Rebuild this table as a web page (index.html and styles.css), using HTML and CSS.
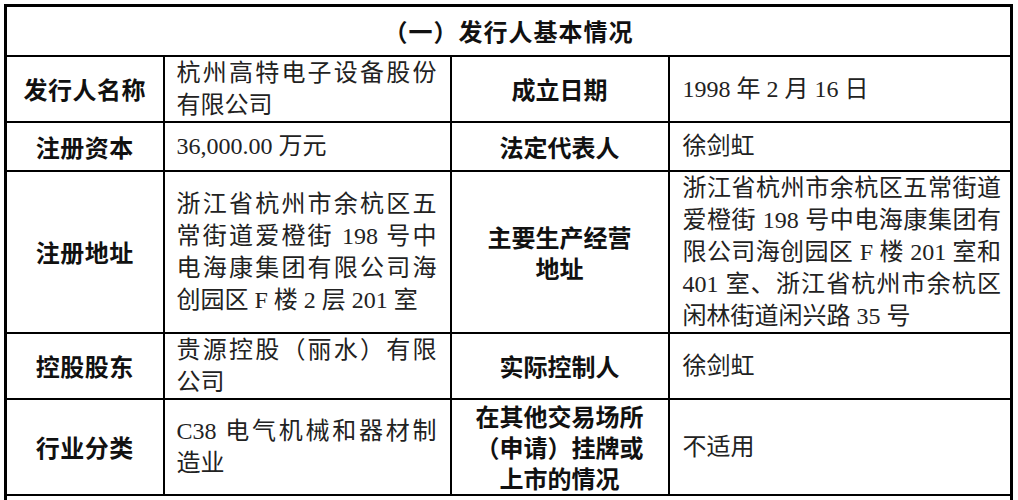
FILE: index.html
```html
<!DOCTYPE html>
<html lang="zh-CN">
<head>
<meta charset="utf-8">
<title>发行人基本情况</title>
<link rel="stylesheet" href="styles.css">
</head>
<body>
<table class="info">
  <colgroup>
    <col class="c1"><col class="c2"><col class="c3"><col class="c4">
  </colgroup>
  <tr class="r-head">
    <td class="title" colspan="4">（一）发行人基本情况</td>
  </tr>
  <tr class="r1">
    <td class="label">发行人名称</td>
    <td class="value">杭州高特电子设备股份有限公司</td>
    <td class="label mid">成立日期</td>
    <td class="value wide">1998 年 2 月 16 日</td>
  </tr>
  <tr class="r2">
    <td class="label">注册资本</td>
    <td class="value">36,000.00 万元</td>
    <td class="label mid">法定代表人</td>
    <td class="value wide">徐剑虹</td>
  </tr>
  <tr class="r3">
    <td class="label">注册地址</td>
    <td class="value">浙江省杭州市余杭区五常街道爱橙街 198 号中电海康集团有限公司海创园区 F 楼 2 层 201 室</td>
    <td class="label mid">主要生产经营<br>地址</td>
    <td class="value wide">浙江省杭州市余杭区五常街道爱橙街 198 号中电海康集团有限公司海创园区 F 楼 201 室和 401 室、浙江省杭州市余杭区闲林街道闲兴路 35 号</td>
  </tr>
  <tr class="r4">
    <td class="label">控股股东</td>
    <td class="value">贵源控股（丽水）有限公司</td>
    <td class="label mid">实际控制人</td>
    <td class="value wide">徐剑虹</td>
  </tr>
  <tr class="r5">
    <td class="label">行业分类</td>
    <td class="value">C38 电气机械和器材制造业</td>
    <td class="label mid">在其他交易场所（申请）挂牌或上市的情况</td>
    <td class="value wide">不适用</td>
  </tr>
  <tr class="r6">
    <td class="more" colspan="4"></td>
  </tr>
</table>
</body>
</html>
```

FILE: styles.css
```css
html, body {
  margin: 0;
  padding: 0;
  overflow: hidden;
  background: #fff;
}

.info {
  margin: 4px 0 0 4px;
  width: 1009px;
  table-layout: fixed;
  border-collapse: collapse;
  border: 3px solid #000;
}

.c1 { width: 158px; }
.c2 { width: 287px; }
.c3 { width: 218px; }
.c4 { width: 343px; }

.info td {
  border: 2px solid #000;
  padding: 0;
  vertical-align: middle;
}

.r-head { height: 50px; }
.r1 { height: 65px; }
.r2 { height: 49px; }
.r3 { height: 161px; }
.r4 { height: 66px; }
.r5 { height: 96px; }
.r6 { height: 40px; }

.info .title {
  text-align: center;
  font-family: "Noto Sans CJK SC", sans-serif;
  font-weight: 700;
  font-size: 24px;
  letter-spacing: 1px;
  color: #111;
}

.info .label {
  text-align: center;
  font-family: "Noto Sans CJK SC", sans-serif;
  font-weight: 700;
  font-size: 24px;
  line-height: 31px;
  letter-spacing: 0.5px;
  color: #111;
  padding: 0 6px;
}

.info .label.mid {
  letter-spacing: 0;
  padding: 0 22px;
}

.info .value {
  font-family: "Liberation Serif", "Noto Sans CJK SC", serif;
  font-size: 24px;
  line-height: 32px;
  color: #222;
  text-align: justify;
  padding: 0 13px 0 12px;
}

.info .value.wide {
  padding: 0 9px 0 13px;
}
```
